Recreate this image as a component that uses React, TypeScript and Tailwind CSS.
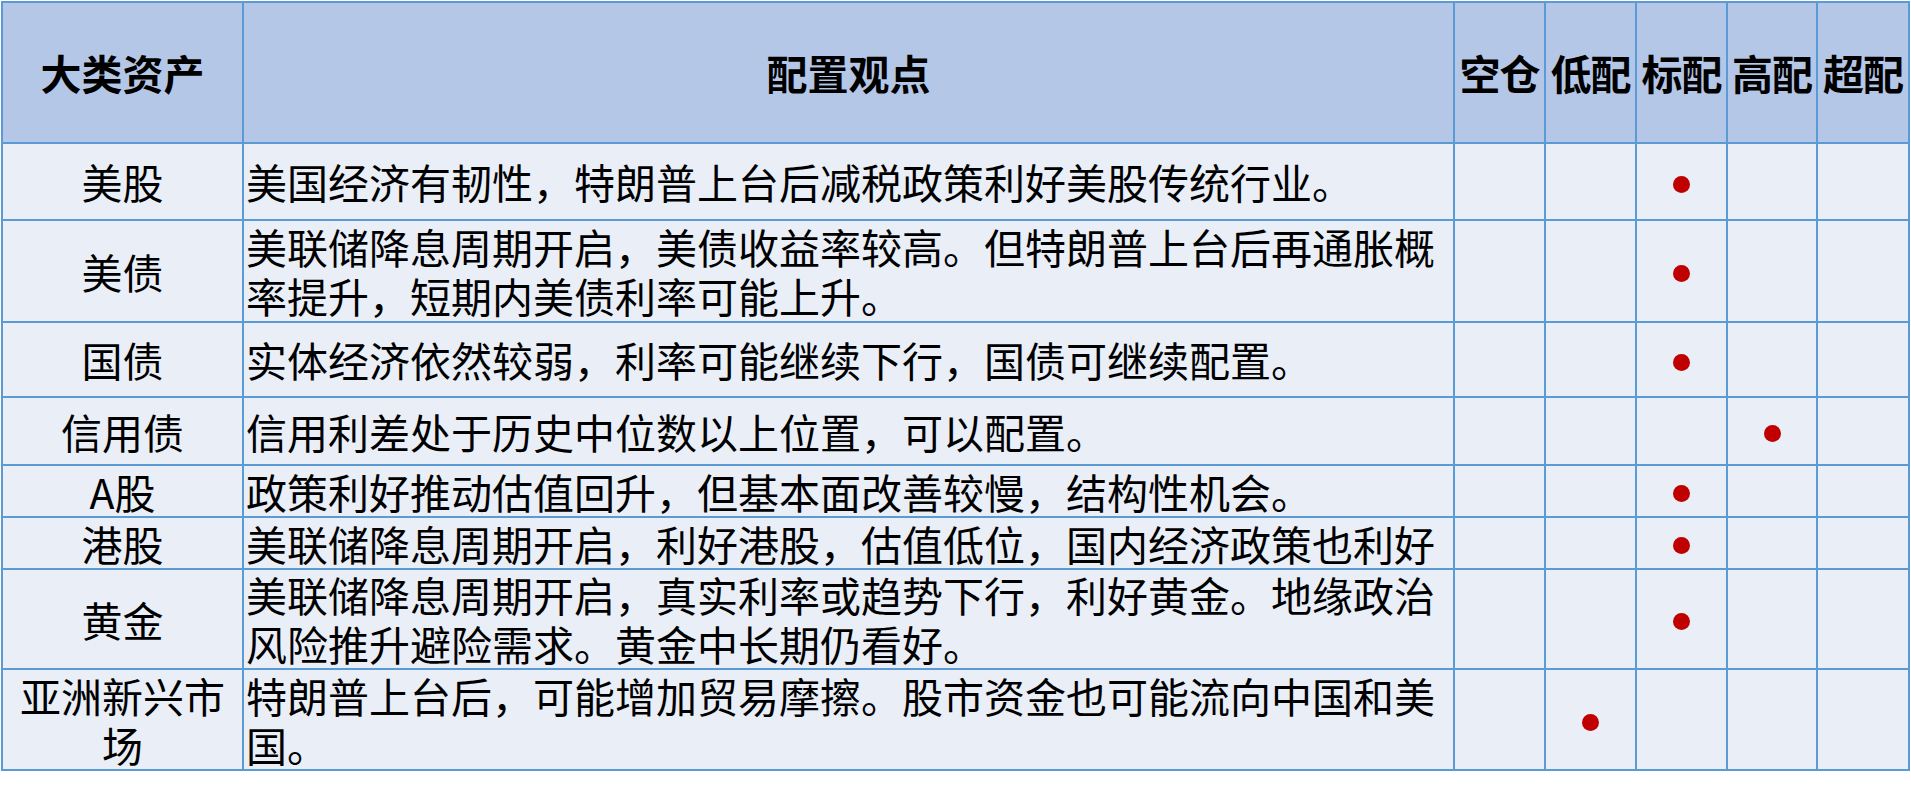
import React from "react";

type Row = { name: string; view: string; level: number; h: string };

const rows: Row[] = [
  { name: "美股", view: "美国经济有韧性，特朗普上台后减税政策利好美股传统行业。", level: 2, h: "" },
  { name: "美债", view: "美联储降息周期开启，美债收益率较高。但特朗普上台后再通胀概率提升，短期内美债利率可能上升。", level: 2, h: "" },
  { name: "国债", view: "实体经济依然较弱，利率可能继续下行，国债可继续配置。", level: 2, h: "" },
  { name: "信用债", view: "信用利差处于历史中位数以上位置，可以配置。", level: 3, h: "" },
  { name: "A股", view: "政策利好推动估值回升，但基本面改善较慢，结构性机会。", level: 2, h: "" },
  { name: "港股", view: "美联储降息周期开启，利好港股，估值低位，国内经济政策也利好", level: 2, h: "" },
  { name: "黄金", view: "美联储降息周期开启，真实利率或趋势下行，利好黄金。地缘政治风险推升避险需求。黄金中长期仍看好。", level: 2, h: "" },
  { name: "亚洲新兴市场", view: "特朗普上台后，可能增加贸易摩擦。股市资金也可能流向中国和美国。", level: 1, h: "" },
];

const levels = ["空仓", "低配", "标配", "高配", "超配"];

export default function App() {
  return (
    <div
      className="bg-white w-[1911px] h-[796px] pt-[1px] pl-[1px]"
      style={{ fontFamily: '"Noto Sans CJK SC", "Noto Sans", sans-serif' }}
    >
      <div className="inline-grid gap-[2px] p-[2px] bg-[#5B9BD5] grid-cols-[239px_1209px_89px_89px_89px_88px_90px] grid-rows-[139px_75px_100px_73px_66px_50px_50px_98px_99px] text-[41px] leading-[49px] text-black">
        <div className="bg-[#B4C7E7] flex items-center justify-center font-bold">大类资产</div>
        <div className="bg-[#B4C7E7] flex items-center justify-center font-bold">配置观点</div>
        {levels.map((l) => (
          <div key={l} className="bg-[#B4C7E7] flex items-center justify-center font-bold whitespace-nowrap tracking-[-1px]">
            {l}
          </div>
        ))}
        {rows.map((r) => (
          <React.Fragment key={r.name}>
            <div className="bg-[#E9EEF7] flex items-center justify-center text-center px-[2px]">{r.name}</div>
            <div className="bg-[#E9EEF7] flex items-center pl-[2px] pr-[2px]">{r.view}</div>
            {levels.map((l, i) => (
              <div key={l} className="bg-[#E9EEF7] flex items-center justify-center pt-[5px]">
                {i === r.level ? <div className="w-[17px] h-[17px] rounded-full bg-[#C00000]" /> : null}
              </div>
            ))}
          </React.Fragment>
        ))}
      </div>
    </div>
  );
}
